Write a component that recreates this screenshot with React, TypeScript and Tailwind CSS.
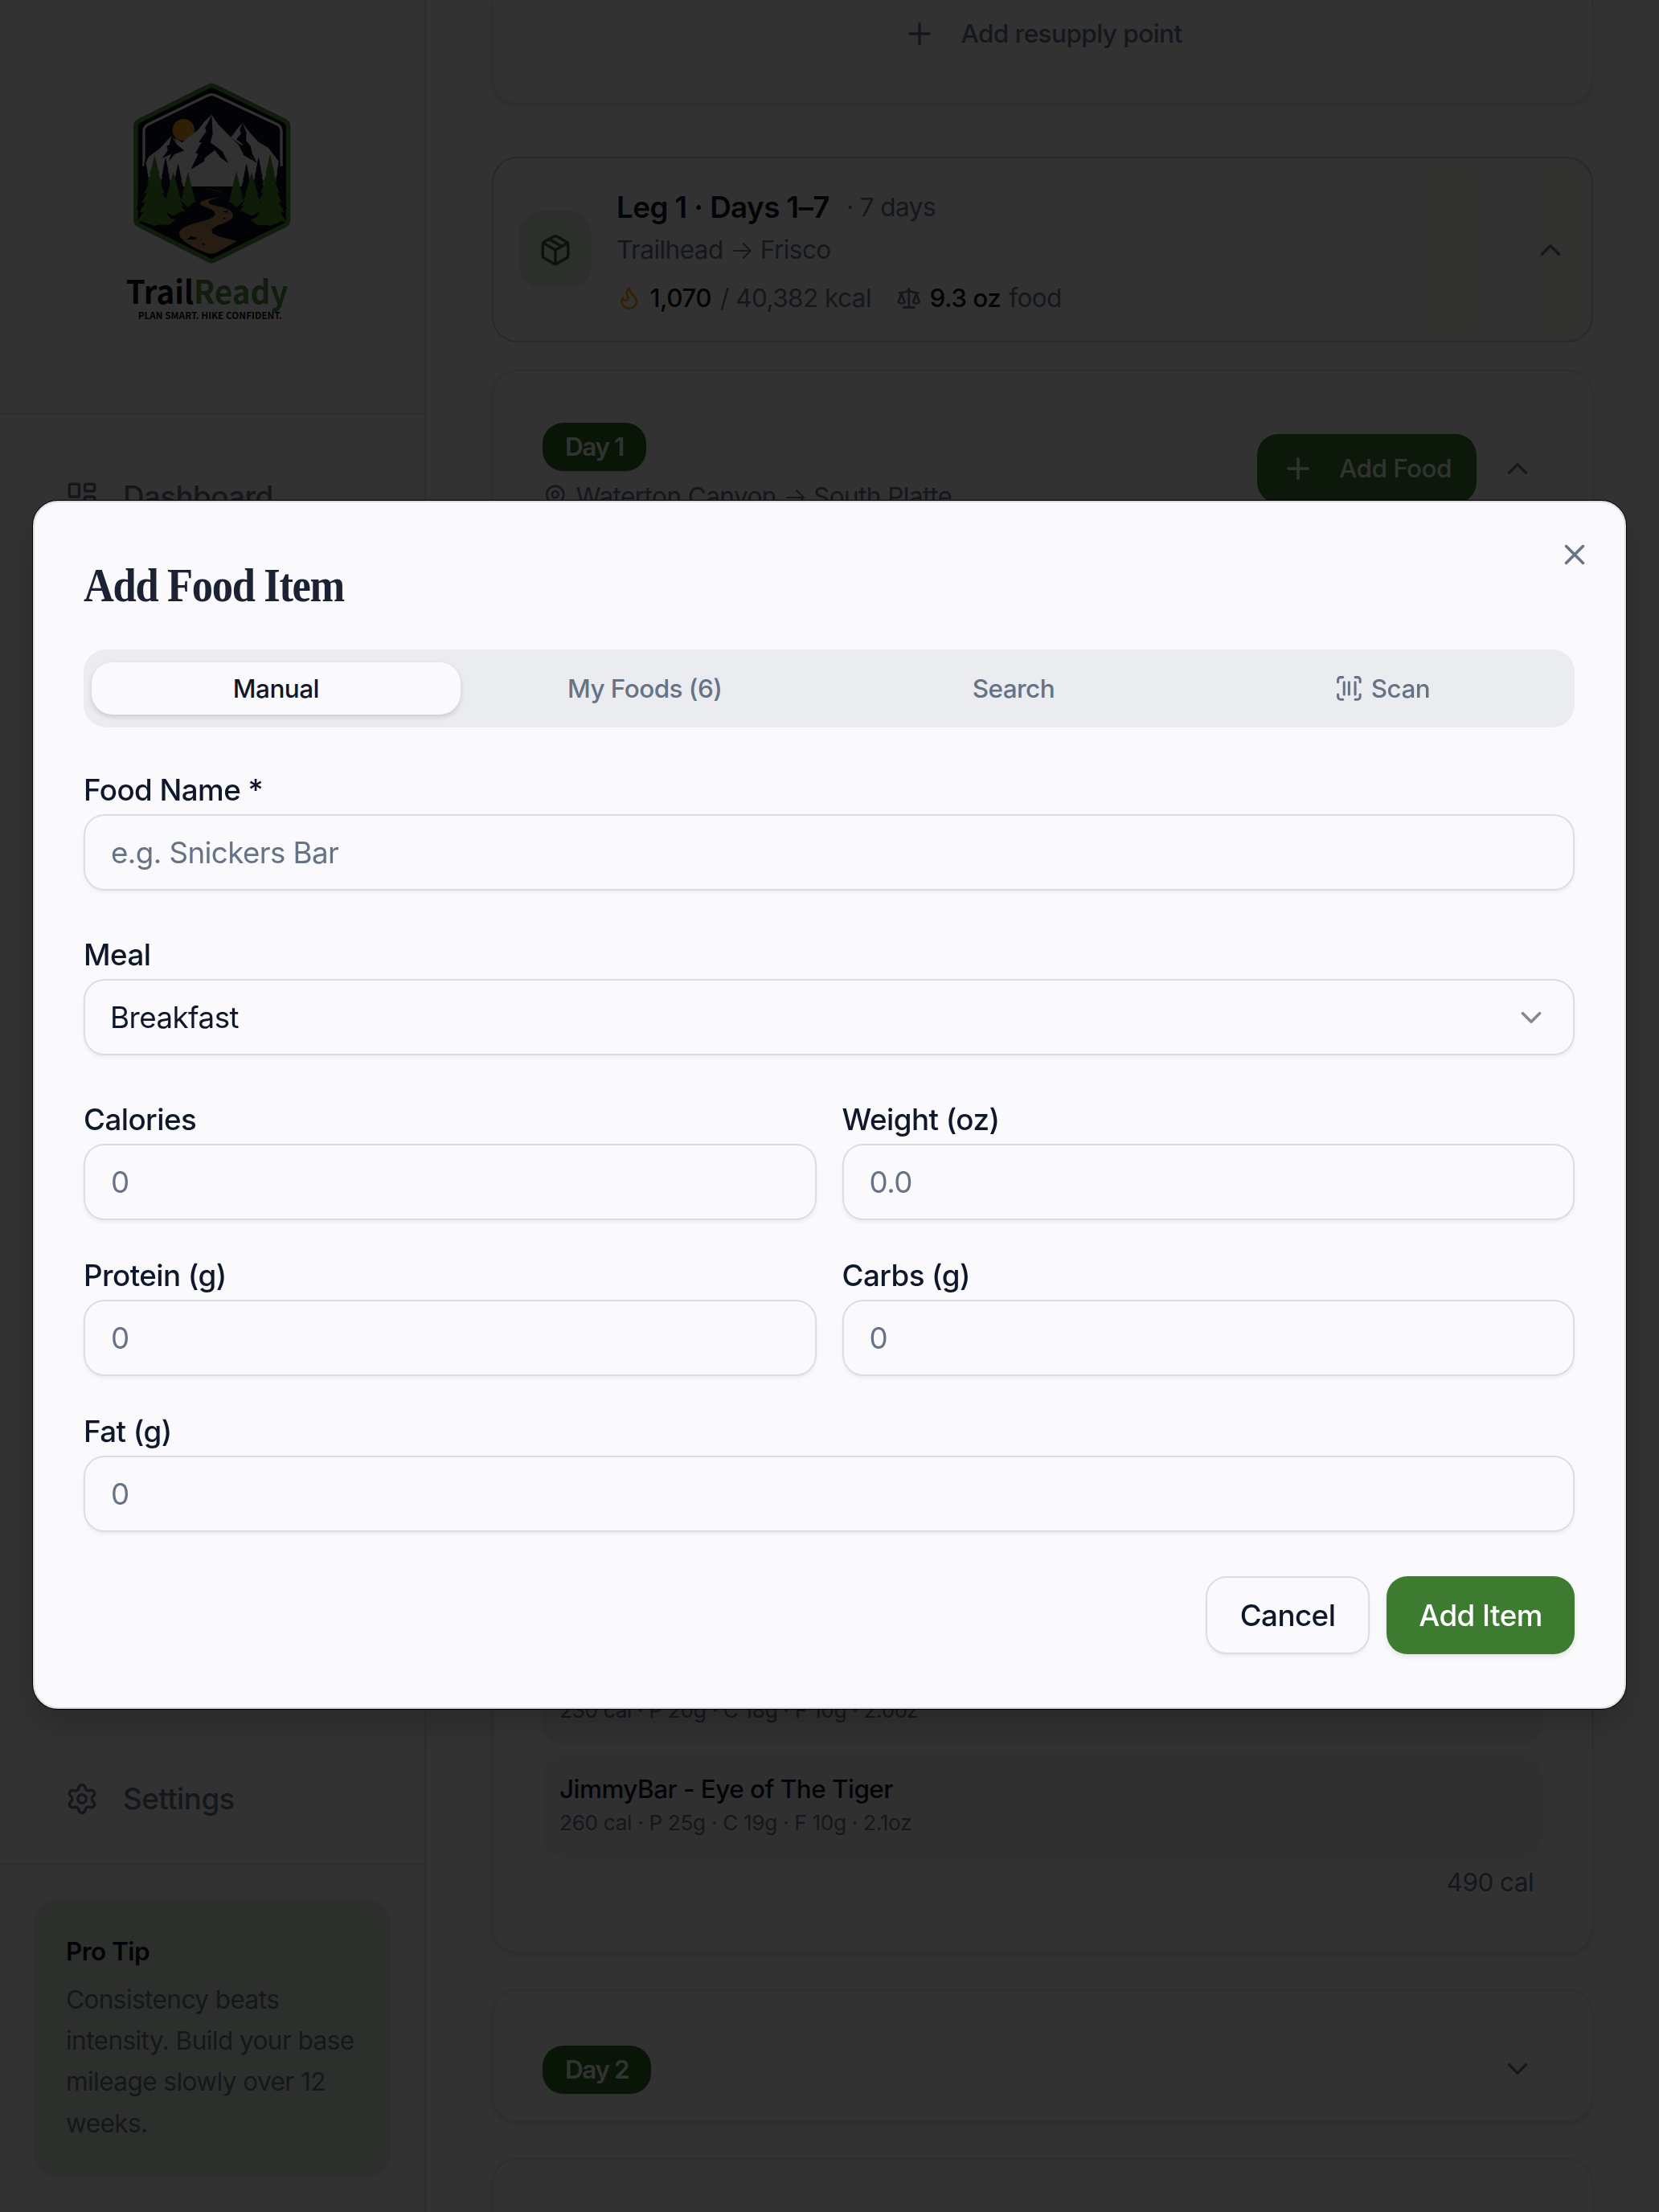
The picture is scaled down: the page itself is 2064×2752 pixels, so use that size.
import { useState } from 'react'
import {
  ChevronDown,
  ChevronUp,
  Flame,
  LayoutDashboard,
  MapPin,
  Package,
  Plus,
  Scale,
  ScanBarcode,
  Settings,
  X,
} from 'lucide-react'

interface Food {
  name: string
  detail: string
}

const foods: Food[] = [
  { name: 'JimmyBar - Cookie Dough', detail: '230 cal · P 20g · C 18g · F 10g · 2.0oz' },
  { name: 'JimmyBar - Eye of The Tiger', detail: '260 cal · P 25g · C 19g · F 10g · 2.1oz' },
]

const tabs = ['Manual', 'My Foods (6)', 'Search', 'Scan']

// Jagged pine outline: tip at (x, top), foot at bottom
function pine(x: number, top: number, bottom: number, half: number) {
  const tiers = 7
  const step = (bottom - top) / tiers
  const right: string[] = []
  const left: string[] = []
  for (let i = 1; i <= tiers; i++) {
    const w = (half * i) / tiers
    const y = top + step * i
    right.push(`${x + w},${y} ${x + w * 0.72},${y - 4}`)
    left.unshift(`${x - w * 0.72},${y - 4} ${x - w},${y}`)
  }
  return `${x},${top} ${right.join(' ')} ${x + 4},${bottom + 12} ${x - 4},${bottom + 12} ${left.join(' ')}`
}

function Logo() {
  const hex = '400,103 662,232 662,580 400,710 140,580 140,232'
  return (
    <svg viewBox="0 0 810 1020" className="h-[340px] w-[270px] tracking-normal">
      <polygon points={hex} fill="#4f8f3d" stroke="#4f8f3d" strokeWidth="64" strokeLinejoin="round" />
      <polygon points={hex} fill="#0a1020" stroke="#05070a" strokeWidth="30" strokeLinejoin="round" />
      <path
        d="M147 380V250Q147 232 163 224L384 117Q400 109 416 117L645 224Q660 232 660 250V380"
        fill="none"
        stroke="#f4f4f8"
        strokeWidth="10"
      />
      <path
        d="M152 372L165 345L205 315L250 268L284 308L300 290L345 250L372 215L400 188L425 225L472 272L498 238L515 219L545 258L575 290L612 312L650 362V456H152Z"
        fill="#f4f4f8"
      />
      <circle cx="295" cy="245" r="41" fill="#e8991c" />
      <path d="M262 275L290 292L318 268L345 248L300 315L284 318Z" fill="#f4f4f8" />
      <path
        d="M400 188L388 215L375 238L380 250L352 290L362 292L340 330L350 335L322 392L372 362L374 350L412 320L432 348L463 370L440 325L395 292L404 262Z"
        fill="#0a1020"
      />
      <path d="M515 219L505 245L510 258L492 280L515 298L520 318L570 368L552 335L545 305L528 285L530 255Z" fill="#0a1020" />
      <path d="M250 268L242 300L232 305L236 322L215 350L248 335L240 362L262 335L298 322L270 300Z" fill="#0a1020" />
      <path d="M472 272L500 295L530 310L545 345L570 368L520 340L500 300Z" fill="#0a1020" />
      <path d="M143 456H658V575L400 700L143 575Z" fill="#0a1020" />
      <g fill="#0a1020">
        <polygon points={pine(152, 350, 540, 34)} />
        <polygon points={pine(228, 345, 520, 36)} />
        <polygon points={pine(275, 370, 520, 34)} />
        <polygon points={pine(530, 370, 520, 34)} />
        <polygon points={pine(575, 345, 520, 36)} />
        <polygon points={pine(652, 350, 540, 30)} />
      </g>
      <g fill="#4b8a2c">
        <polygon points={pine(312, 402, 518, 32)} />
        <polygon points={pine(492, 400, 518, 32)} />
        <polygon points={pine(257, 402, 552, 46)} />
        <polygon points={pine(549, 402, 552, 46)} />
        <polygon points={pine(187, 340, 590, 68)} />
        <polygon points={pine(618, 335, 590, 62)} />
        <path d="M145 540L200 560L265 580L240 600L200 598L170 592L145 572Z" />
        <path d="M658 540L600 560L545 580L570 600L610 600L640 590L658 572Z" />
      </g>
      <path
        d="M380 461C395 472 440 470 438 486C434 502 356 500 357 520C360 535 418 535 412 562C405 590 278 590 279 634C282 660 340 690 385 705Q402 711 420 702L495 660C440 645 400 640 400 622C405 595 480 595 480 562C478 530 388 530 388 515C392 500 440 500 438 482C432 465 400 472 380 461Z"
        fill="#c08a58"
      />
      <path d="M308 654L322 641L348 648L335 654Z M362 672L372 668L376 676Z M440 550L462 545L458 555Z M440 577L452 571L450 578Z" fill="#0a1020" />
      <g fontFamily="'Noto Sans CJK SC', 'Noto Sans', sans-serif" fontWeight="700">
        <text x="80" y="893" fontSize="120" textLength="605" lengthAdjust="spacingAndGlyphs" fill="#0a1020">
          Trail<tspan fill="#4f8f3d">Ready</tspan>
        </text>
        <text x="125" y="951" fontSize="36" textLength="538" lengthAdjust="spacingAndGlyphs" fill="#0a1020">
          PLAN SMART. HIKE CONFIDENT.
        </text>
      </g>
    </svg>
  )
}

function Sidebar() {
  return (
    <aside className="flex h-full w-[530px] shrink-0 flex-col border-r-2 border-[#d8dce1]">
      <div className="flex h-[516px] shrink-0 justify-center border-b-2 border-[#d8dce1] pt-[80px] pl-[2px]">
        <Logo />
      </div>
      <nav className="flex flex-1 flex-col justify-between px-[81px] pt-[60px] pb-[38px] text-[36.75px] font-medium text-[#64748b]">
        <a className="flex h-[84px] items-center gap-[30px]">
          <LayoutDashboard className="size-[42px]" />
          Dashboard
        </a>
        <a className="flex h-[84px] items-center gap-[30px]">
          <Settings className="size-[42px]" />
          Settings
        </a>
      </nav>
      <div className="h-[434px] shrink-0 border-t-2 border-[#d8dce1] pt-[44px] pr-[41px] pl-[41px]">
        <div className="h-[345px] rounded-[31px] bg-[#e1ebdd] px-[41px] pt-[43px]">
          <p className="text-[31.5px] leading-[42px] font-semibold text-[#0f172a]">Pro Tip</p>
          <p className="mt-[13px] text-[31.5px] leading-[51.2px] whitespace-nowrap text-[#64748b]">
            Consistency beats
            <br />
            intensity. Build your base
            <br />
            mileage slowly over 12
            <br />
            weeks.
          </p>
        </div>
      </div>
    </aside>
  )
}

function DayBadge({ children }: { children: string }) {
  return (
    <span className="flex h-[60px] w-fit items-center rounded-[26px] bg-[#2f6b1f] px-[28px] text-[31.5px] font-semibold tracking-[-0.045em] text-[#fafafe] shadow">
      {children}
    </span>
  )
}

function LegCard() {
  return (
    <div className="mt-[65px] flex h-[231px] shrink-0 items-center rounded-[32px] border-2 border-[#c2d0bd] bg-linear-to-r from-[#fafafc] from-75% to-[#f6f5ef] pr-[30px] pl-[31px]">
      <div className="flex h-[97px] w-[91px] items-center justify-center rounded-[30px] bg-[#e2ebe0]">
        <Package className="size-[42px] text-[#2f6b1f]" />
      </div>
      <div className="ml-[31px] flex-1 pt-[3px] text-[31.5px] text-[#64748b]">
        <div className="flex h-[53px] items-center">
          <span className="text-[36.75px] font-semibold text-[#0f172a]">Leg 1 · Days 1–7</span>
          <span className="ml-[21px]">· 7 days</span>
        </div>
        <div className="flex h-[53px] items-center whitespace-pre">
          Trailhead <span className="font-light">→</span> Frisco
        </div>
        <div className="mt-[11px] flex h-[45px] items-center">
          <Flame className="mr-[10px] size-[31.5px] text-[#f59e0b]" />
          <span className="font-medium text-[#0f172a]">1,070</span>
          <span className="ml-[11px]">/ 40,382 kcal</span>
          <Scale className="mr-[10px] ml-[31px] size-[31.5px]" />
          <span className="font-medium text-[#0f172a]">9.3 oz</span>
          <span className="ml-[10px]">food</span>
        </div>
      </div>
      <ChevronUp className="size-[42px] text-[#64748b]" />
    </div>
  )
}

function DayOneCard() {
  return (
    <div className="mt-[34px] flex h-[1970px] shrink-0 flex-col justify-between rounded-[32px] border-2 border-[#e0e3e7] bg-[#fbfbfe] px-[61px] pt-[64px] pb-[65px] shadow-[0_3px_8px_rgba(0,0,0,0.12)]">
      <div className="flex justify-between">
        <div>
          <DayBadge>Day 1</DayBadge>
          <div className="mt-[11px] flex h-[42px] items-center text-[31.5px] whitespace-pre text-[#64748b]">
            <MapPin className="mr-[10px] size-[31.5px]" />
            Waterton Canyon <span className="font-light">→</span> South Platte
          </div>
        </div>
        <div className="mt-[14px] flex h-[86px] items-center">
          <button className="flex h-[86px] w-[273px] items-center rounded-[26px] bg-[#3d7b30] pl-[30px] text-[31.5px] font-medium text-[#fafafe]">
            <Plus className="mr-[30px] size-[42px]" />
            Add Food
          </button>
          <ChevronUp className="mr-[10px] ml-[30px] size-[42px] text-[#64748b]" />
        </div>
      </div>
      <div>
        <div className="flex flex-col gap-[13px]">
          {foods.map((food) => (
            <div key={food.name} className="h-[127px] rounded-[26px] bg-[#eff0f3] px-[21px] pt-[21px]">
              <p className="text-[31.5px] leading-[42px] font-medium text-[#0f172a]">{food.name}</p>
              <p className="text-[26.25px] leading-[42px] tracking-[-0.35px] text-[#64748b]">{food.detail}</p>
            </div>
          ))}
        </div>
        <p className="mt-[10px] pr-[11px] text-right text-[31.5px] leading-[42px] text-[#64748b]">490 cal</p>
      </div>
    </div>
  )
}

function Field({ label, placeholder }: { label: string; placeholder: string }) {
  return (
    <div>
      <label className="block h-[56px] text-[36.75px] leading-[52px] font-medium text-[#0f172a]">{label}</label>
      <input
        placeholder={placeholder}
        className="block h-[95px] w-full rounded-[26px] border-2 border-[#dadee2] bg-transparent px-[32px] text-[36.75px] shadow-[0_3px_4px_rgba(0,0,0,0.05)] placeholder:text-[#667386]"
      />
    </div>
  )
}

function AddFoodModal() {
  const [active, setActive] = useState('Manual')

  return (
    <div className="fixed inset-0 flex items-start justify-center bg-black/80 pt-[623px]">
      <div className="relative h-[1503px] w-[1982px] rounded-[31px] border-2 border-[#dadee2] bg-[#fafafd] pr-[62px] pl-[61px] shadow-[0_0_0_1px_#000,0_20px_40px_rgba(0,0,0,0.2)]">
        <button className="absolute top-[44px] right-[41px]">
          <X className="size-[42px] text-[#667386]" />
        </button>
        <h2 className="origin-left scale-x-[0.89] pt-[70px] font-['Liberation_Serif',serif] text-[59px] leading-[66px] font-bold tracking-[-1.5px] text-[#1a2233]">
          Add Food Item
        </h2>
        <div className="mt-[47px] grid h-[97px] grid-cols-4 items-center rounded-[28px] bg-[#ebecf0] px-[10px]">
          {tabs.map((tab) => (
            <button
              key={tab}
              onClick={() => setActive(tab)}
              className={`flex h-[65px] items-center justify-center rounded-[26px] text-[31.5px] font-medium ${
                active === tab
                  ? 'bg-[#fafafd] text-[#0f172a] shadow-[0_3px_6px_rgba(0,0,0,0.14)]'
                  : 'text-[#667386]'
              }`}
            >
              {tab === 'Scan' && <ScanBarcode className="mr-[9px] size-[36.75px]" />}
              {tab}
            </button>
          ))}
        </div>
        <div className="mt-[52px] flex flex-col gap-[54px]">
          <Field label="Food Name *" placeholder="e.g. Snickers Bar" />
          <div>
            <label className="block h-[56px] text-[36.75px] leading-[52px] font-medium text-[#0f172a]">Meal</label>
            <button className="flex h-[95px] w-full items-center justify-between rounded-[26px] border-2 border-[#dadee2] px-[31px] text-[36.75px] text-[#0f172a] shadow-[0_3px_4px_rgba(0,0,0,0.05)]">
              Breakfast
              <ChevronDown className="size-[42px] opacity-50" />
            </button>
          </div>
          <div className="grid grid-cols-2 gap-x-[32px] gap-y-[43px]">
            <Field label="Calories" placeholder="0" />
            <Field label="Weight (oz)" placeholder="0.0" />
            <Field label="Protein (g)" placeholder="0" />
            <Field label="Carbs (g)" placeholder="0" />
            <div className="col-span-2">
              <Field label="Fat (g)" placeholder="0" />
            </div>
          </div>
        </div>
        <div className="mt-[55px] flex justify-end gap-[21px] text-[36.75px] font-medium">
          <button className="h-[97px] w-[204px] rounded-[26px] border-2 border-[#dadee2] text-[#0f172a] shadow-[0_3px_4px_rgba(0,0,0,0.05)]">
            Cancel
          </button>
          <button className="h-[97px] w-[234px] rounded-[26px] bg-[#3d7b30] text-white shadow-[0_3px_6px_rgba(0,0,0,0.1)]">
            Add Item
          </button>
        </div>
      </div>
    </div>
  )
}

export default function App() {
  return (
    <div className="flex h-screen w-screen overflow-hidden bg-[#fafafc] font-['Inter',sans-serif] tracking-[-0.55px] [&_input]:tracking-[-0.6px]">
      <Sidebar />
      <main className="flex flex-1 flex-col overflow-hidden pr-[82px] pl-[82px]">
        <div className="flex h-[130px] shrink-0 justify-center rounded-b-[32px] border-2 border-t-0 border-[#e0e3e7] bg-[#fbfbfe] pt-[21px] shadow-[0_3px_8px_rgba(0,0,0,0.12)]">
          <div className="flex h-[42px] items-center text-[31.5px] font-medium text-[#64748b]">
            <Plus className="mr-[30px] size-[42px]" />
            Add resupply point
          </div>
        </div>
        <LegCard />
        <DayOneCard />
        <div className="mt-[45px] flex h-[165px] shrink-0 justify-between rounded-[32px] border-2 border-[#e0e3e7] bg-[#fbfbfe] pt-[68px] pr-[71px] pl-[61px] shadow-[0_3px_8px_rgba(0,0,0,0.12)]">
          <DayBadge>Day 2</DayBadge>
          <ChevronDown className="mt-[8px] size-[42px] text-[#64748b]" />
        </div>
        <div className="mt-[45px] h-[165px] shrink-0 rounded-[32px] border-2 border-[#e0e3e7] bg-[#fbfbfe] shadow-[0_3px_8px_rgba(0,0,0,0.12)]" />
      </main>
      <AddFoodModal />
    </div>
  )
}
